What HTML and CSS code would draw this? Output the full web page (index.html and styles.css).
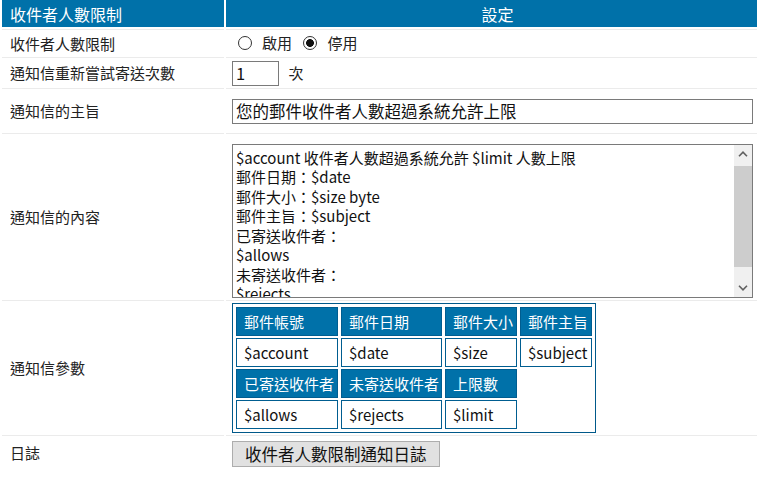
FILE: index.html
```html
<!DOCTYPE html>
<html lang="zh-Hant">
<head>
  <meta charset="UTF-8" />
  <title>收件者人數限制</title>
  <meta name="viewport" content="width=device-width, initial-scale=1.0" />
  <link rel="stylesheet" href="styles.css">
</head>
<body>

<table class="form">
  <tr class="head">
    <th class="label">收件者人數限制</th>
    <th class="center">設定</th>
  </tr>

  <tr class="row-limit">
    <td class="label">收件者人數限制</td>
    <td class="field">
      <label class="opt"><input type="radio" name="limit" /> 啟用</label>
      <label class="opt"><input type="radio" name="limit" checked /> 停用</label>
    </td>
  </tr>

  <tr class="row-retry">
    <td class="label">通知信重新嘗試寄送次數</td>
    <td class="field">
      <input type="text" class="txt num" value="1" />
      <span class="unit">次</span>
    </td>
  </tr>

  <tr class="row-subject">
    <td class="label">通知信的主旨</td>
    <td class="field">
      <input type="text" class="txt wide" value="您的郵件收件者人數超過系統允許上限" />
    </td>
  </tr>

  <tr class="row-body">
    <td class="label">通知信的內容</td>
    <td class="field">
      <div class="memo">
        <textarea class="memo-text" spellcheck="false">$account 收件者人數超過系統允許 $limit 人數上限
郵件日期：$date
郵件大小：$size byte
郵件主旨：$subject
已寄送收件者：
$allows
未寄送收件者：
$rejects</textarea>
        <!-- scrollbar, drawn so it looks like the classic one -->
        <div class="bar">
          <div class="bar-btn">
            <svg width="10" height="6" viewBox="0 0 10 6"><path d="M1 5.2 L5 1.2 L9 5.2" fill="none" stroke="#606060" stroke-width="1.6"/></svg>
          </div>
          <div class="bar-thumb"></div>
          <div class="bar-btn bottom">
            <svg width="10" height="6" viewBox="0 0 10 6"><path d="M1 0.8 L5 4.8 L9 0.8" fill="none" stroke="#606060" stroke-width="1.6"/></svg>
          </div>
        </div>
      </div>
    </td>
  </tr>

  <tr class="row-params">
    <td class="label">通知信參數</td>
    <td class="field">
      <table class="params">
        <tr>
          <th class="c1">郵件帳號</th>
          <th class="c2">郵件日期</th>
          <th class="c3">郵件大小</th>
          <th class="c4">郵件主旨</th>
        </tr>
        <tr>
          <td>$account</td>
          <td>$date</td>
          <td>$size</td>
          <td>$subject</td>
        </tr>
        <tr>
          <th>已寄送收件者</th>
          <th>未寄送收件者</th>
          <th>上限數</th>
        </tr>
        <tr>
          <td>$allows</td>
          <td>$rejects</td>
          <td>$limit</td>
        </tr>
      </table>
    </td>
  </tr>

  <tr class="row-log">
    <td class="label">日誌</td>
    <td class="field">
      <button class="btn" type="button">收件者人數限制通知日誌</button>
    </td>
  </tr>
</table>

</body>
</html>
```

FILE: styles.css
```css
* { box-sizing: border-box; }
body {
  margin: 0;
  background: #fff;
  color: #222;
  font-family: "Noto Sans CJK TC", "Noto Sans", sans-serif;
  font-size: 15px;
}

.form {
  width: 100%;
  border-collapse: separate;
  border-spacing: 2px 0;
}

.form th {
  background: #0071a9;
  color: #fff;
  font-weight: normal;
  font-size: 16px;
  text-align: left;
  height: 29px;
  padding: 0 8px;
  border-bottom: 2px solid #fff;
}

.form th.center { text-align: center; padding-left: 20px; }

.form th.label, .form td.label { width: 222px; }

.form td {
  border-top: 1px solid #ebebeb;
  vertical-align: middle;
  padding: 0;
  line-height: 20px;
}

.form td.label { padding-left: 8px; }
.form td.field { padding-left: 6px; padding-right: 4px; }

.row-limit { height: 28px; }
.row-retry { height: 31px; }
.row-subject { height: 45px; }
.row-body { height: 167px; }
.row-params { height: 135px; }
.row-log { height: 35px; }

/* radios */
.opt {
  display: inline-flex;
  align-items: center;
  margin-right: 8px;
}

.opt input {
  appearance: none;
  -webkit-appearance: none;
  width: 14px;
  height: 14px;
  margin: 0 10px 0 6px;
  border: 1px solid #333;
  border-radius: 50%;
  background: #fff;
}

.opt + .opt input { margin-left: 0; }

.opt input:checked {
  background: radial-gradient(circle, #111 0 3.6px, #fff 4.2px);
}

/* text inputs */
.txt {
  height: 25px;
  border: 1px solid #7a7a7a;
  font-family: inherit;
  font-size: 16.5px;
  color: #111;
  padding: 0 3px;
  outline: none;
  vertical-align: middle;
}

.txt.num { width: 47px; }
.txt.wide { width: 521px; }

.unit { margin-left: 6px; vertical-align: middle; }

/* message body */
.memo {
  display: flex;
  width: 521px;
  height: 154px;
  margin-top: 7px;
  border: 1px solid #7a7a7a;
  background: #fff;
}

.memo-text {
  flex: 1;
  border: none;
  resize: none;
  overflow: hidden;
  outline: none;
  font-family: inherit;
  font-size: 15px;
  line-height: 19.5px;
  color: #111;
  padding: 3px 3px 0 3px;
  white-space: pre;
}

.bar {
  width: 18px;
  background: #f0f0f0;
  display: flex;
  flex-direction: column;
}

.bar-btn {
  height: 18px;
  display: flex;
  align-items: center;
  justify-content: center;
}

.bar-btn.bottom { margin-top: auto; }

.bar-thumb {
  height: 101px;
  margin-top: 3px;
  background: #cdcdcd;
}

/* parameter table */
.params {
  border: 1px solid #00598a;
  border-spacing: 3px 2px;
  padding: 1px 0;
}

.params th, .params td {
  height: 29px;
  padding: 0 0 0 7px;
  border: 1px solid #005d90;
  font-size: 15px;
  line-height: 20px;
  text-align: left;
  white-space: nowrap;
}

.params th {
  background: #0071a9;
  color: #fff;
  font-weight: normal;
}

.params td {
  background: #fff;
  color: #111;
}

.params .c1 { width: 102px; }
.params .c2 { width: 101px; }
.params .c3 { width: 72px; }
.params .c4 { width: 72px; }

/* log button */
.btn {
  height: 26px;
  padding: 0 12px;
  background: #e1e1e1;
  border: 1px solid #adadad;
  font-family: inherit;
  font-size: 16.5px;
  line-height: 22px;
  color: #111;
  margin-top: 2px;
}
```
